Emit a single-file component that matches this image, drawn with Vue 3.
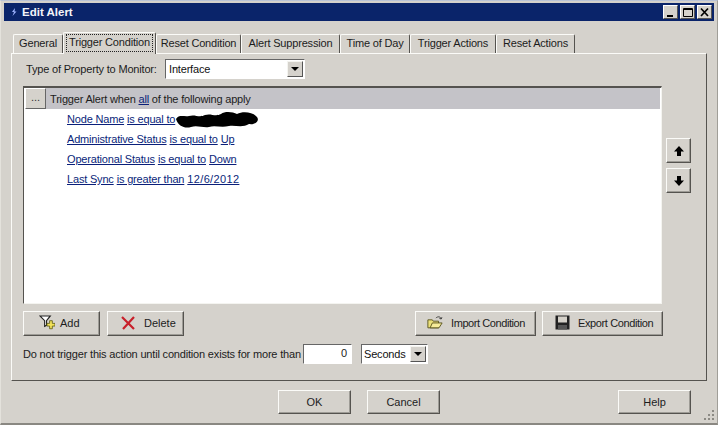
<script setup>
const tabs = [
  { label: 'General', w: 50 },
  { label: 'Trigger Condition', w: 93, active: true },
  { label: 'Reset Condition', w: 85 },
  { label: 'Alert Suppression', w: 99 },
  { label: 'Time of Day', w: 70 },
  { label: 'Trigger Actions', w: 86 },
  { label: 'Reset Actions', w: 79 },
]
</script>

<template>
  <div class="window">
    <header class="titlebar">
      <svg class="appicon" width="10" height="10" viewBox="0 0 10 10">
        <path d="M6 1 L3 5 H5 L3.5 9 L7.5 4.5 H5.5 Z" fill="#9fb4ff" />
      </svg>
      <span class="title">Edit Alert</span>
      <div class="controls">
        <button class="ctl"><svg width="12" height="11" viewBox="0 0 12 11"><rect x="2" y="8" width="6" height="2" fill="#000" /></svg></button>
        <button class="ctl"><svg width="12" height="11" viewBox="0 0 12 11"><path d="M1.5 1.5h9v8h-9z M1.5 2.5h9" fill="none" stroke="#000" /></svg></button>
        <button class="ctl close"><svg width="12" height="11" viewBox="0 0 12 11"><path d="M2 1.5l7 7.5M9 1.5l-7 7.5" stroke="#000" stroke-width="1.7" /></svg></button>
      </div>
    </header>

    <div class="tabs">
      <div
        v-for="t in tabs"
        :key="t.label"
        class="tab"
        :class="{ active: t.active }"
        :style="{ width: t.w + 'px' }"
      >
        <span :class="{ focus: t.active }">{{ t.label }}</span>
      </div>
    </div>

    <section class="panel">
      <div class="monitor">
        <label>Type of Property to Monitor:</label>
        <div class="select wide">
          <span class="value">Interface</span>
          <span class="arrow"><i></i></span>
        </div>
      </div>

      <div class="middle">
        <div class="box">
          <div class="boxhead">
            <button class="dots">...</button>
            <span>Trigger Alert when <a>all</a> of the following apply</span>
          </div>
          <div class="rows">
            <div class="row"><a>Node Name</a> <a>is equal to</a>
              <svg class="blot" width="84" height="18" viewBox="0 0 84 18">
                <path d="M1 8 C4 3 9 6 14 5 C20 3 24 7 30 4 C36 2 40 6 46 3 C50 0 58 1 62 3 C68 0 78 1 82 6 C85 10 80 14 74 13 C68 17 60 14 54 15 C46 17 40 14 34 16 C28 17 22 14 16 16 C10 18 3 15 1 8 Z" fill="#000" />
              </svg>
            </div>
            <div class="row"><a>Administrative Status</a> <a>is equal to</a> <a>Up</a></div>
            <div class="row"><a>Operational Status</a> <a>is equal to</a> <a>Down</a></div>
            <div class="row"><a>Last Sync</a> <a>is greater than</a> <a class="date">12/6/2012</a></div>
          </div>
        </div>
        <div class="updown">
          <button class="btn arrowbtn">
            <svg width="12" height="12" viewBox="0 0 12 12"><path d="M6 1L11 6.5H8V11H4V6.5H1Z" fill="#000" /></svg>
          </button>
          <button class="btn arrowbtn">
            <svg width="12" height="12" viewBox="0 0 12 12"><path d="M6 11L1 5.5H4V1H8V5.5H11Z" fill="#000" /></svg>
          </button>
        </div>
      </div>

      <div class="actions">
        <button class="btn act add">
          <svg width="16" height="18" viewBox="1 1 17 19">
            <path d="M2 3H13L9 8V13L7 14V8Z" fill="#fff" stroke="#222" stroke-width="1.2" />
            <path d="M11 12h3v-3h3v3h3v3h-3v3h-3v-3h-3z" transform="translate(-1 -0.5) scale(.95)" fill="#f2e25a" stroke="#5a5a10" stroke-width=".9" />
          </svg>
          <span>Add</span>
        </button>
        <button class="btn act del">
          <svg width="16" height="16" viewBox="0 0 16 16">
            <path d="M2 2L14 14M14 2L3 14" stroke="#c8202a" stroke-width="2.2" fill="none" />
          </svg>
          <span>Delete</span>
        </button>
        <div class="spacer"></div>
        <button class="btn act imp">
          <svg width="16" height="15" viewBox="0 0 18 16">
            <path d="M1 5H6L7 6.5H13V14H1Z" fill="#ebe07a" stroke="#55501a" />
            <path d="M3.5 14L6 8.5H17L13.5 14Z" fill="#f6ec9a" stroke="#55501a" />
            <path d="M10 3C12 1 15 1 16 4M16 4L14 3.5M16 4L16.8 2" fill="none" stroke="#333" />
          </svg>
          <span>Import Condition</span>
        </button>
        <button class="btn act exp">
          <svg width="15" height="15" viewBox="0 0 15 15">
            <path d="M0.5 0.5H14.5V14.5H0.5Z" fill="#222" />
            <rect x="3" y="1.5" width="9" height="6" fill="#d4d0c8" />
            <rect x="3" y="10" width="9" height="4.5" fill="#555" />
          </svg>
          <span>Export Condition</span>
        </button>
      </div>

      <div class="delay">
        <label>Do not trigger this action until condition exists for more than</label>
        <div class="input">0</div>
        <div class="select unit">
          <span class="value">Seconds</span>
          <span class="arrow"><i></i></span>
        </div>
      </div>
    </section>

    <footer class="footer">
      <button class="btn foot">OK</button>
      <button class="btn foot">Cancel</button>
      <div class="spacer"></div>
      <button class="btn foot">Help</button>
    </footer>

    <svg class="grip" width="12" height="12" viewBox="0 0 12 12">
      <g fill="#8c8a84">
        <rect x="9" y="1" width="2" height="2" />
        <rect x="5" y="5" width="2" height="2" />
        <rect x="9" y="5" width="2" height="2" />
        <rect x="1" y="9" width="2" height="2" />
        <rect x="5" y="9" width="2" height="2" />
        <rect x="9" y="9" width="2" height="2" />
      </g>
    </svg>
  </div>
</template>

<style>
html, body { margin: 0; overflow: hidden; background: #d4d0c8; }
</style>

<style scoped>
* { box-sizing: border-box; }
.window {
  position: relative;
  width: 718px;
  height: 425px;
  padding: 3px 3px 0;
  background: #d5d2cc;
  border-top: 1px solid #b9c3d6;
  border-left: 1px solid #e4e2dc;
  border-right: 1px solid #a09e98;
  border-bottom: 2px solid #8a8882;
  font-family: "Liberation Sans", Arial, sans-serif;
  font-size: 11px;
  letter-spacing: -0.18px;
  color: #1c1c1c;
  display: flex;
  flex-direction: column;
}
.titlebar {
  height: 18px;
  margin-top: -1px;
  background: #0a246a;
  display: flex;
  align-items: center;
  padding: 0 2px 0 5px;
  flex: none;
}
.appicon { margin-right: 3px; }
.title { color: #f4f4f8; font-weight: 700; font-size: 11.5px; letter-spacing: 0; }
.controls { margin-left: auto; display: flex; gap: 2px; }
.ctl {
  width: 15px;
  height: 14px;
  padding: 0;
  background: #d5d2cc;
  border: 1px solid;
  border-color: #fff #555 #555 #fff;
  display: flex;
  align-items: center;
  justify-content: center;
}
.tabs {
  display: flex;
  align-items: flex-end;
  height: 22px;
  margin-top: 10px;
  padding-left: 9px;
  flex: none;
  position: relative;
  z-index: 1;
}
.tab {
  height: 19px;
  padding-bottom: 2px;
  background: #d5d2cc;
  border: 1px solid;
  border-color: #fbfbf8 #55534f transparent #fbfbf8;
  border-bottom: none;
  border-radius: 2px 2px 0 0;
  display: flex;
  align-items: center;
  justify-content: center;
  white-space: nowrap;
}
.tab.active {
  height: 22px;
  margin-bottom: -1px;
}
.focus { border: 1px dotted #222; padding: 0 2px 1px; line-height: 15px; }
.panel {
  width: 696px;
  height: 328px;
  margin-left: 7px;
  padding: 5px 12px 0 11px;
  border: 1px solid;
  border-color: #fbfbf8 #55534f #55534f #fbfbf8;
  flex: none;
}
.monitor {
  height: 20px;
  display: flex;
  align-items: center;
  padding-left: 3px;
}
.monitor label { width: 139px; white-space: nowrap; }
.select {
  display: flex;
  align-items: center;
  background: #fff;
  border: 1px solid;
  border-color: #666 #fff #fff #666;
  height: 20px;
  padding: 1px;
}
.select.wide { width: 140px; }
.select.unit { width: 67px; margin-left: 9px; }
.unit .value { padding-left: 1px; }
.value { flex: 1; padding-left: 2px; color: #111; }
.arrow {
  width: 16px;
  height: 16px;
  background: #d5d2cc;
  border: 1px solid;
  border-color: #f4f4f0 #555 #555 #f4f4f0;
  display: flex;
  align-items: center;
  justify-content: center;
}
.arrow i {
  border-left: 4px solid transparent;
  border-right: 4px solid transparent;
  border-top: 4px solid #000;
}
.middle {
  display: flex;
  gap: 4px;
  margin-top: 7px;
}
.box {
  width: 639px;
  height: 218px;
  background: #fff;
  border: 1px solid;
  border-top: 2px solid #55534f;
  border-left-color: #55534f;
  border-right-color: #f4f4f0;
  border-bottom-color: #f4f4f0;
  padding: 0 1px;
}
.boxhead {
  height: 21px;
  background: #c4c3c8;
  display: flex;
  align-items: center;
  gap: 4px;
}
.dots {
  width: 21px;
  height: 21px;
  padding: 0 0 4px;
  font: inherit;
  color: #333;
  background: #d5d2cc;
  border: 1px solid;
  border-color: #fff #666 #666 #fff;
}
a { color: #0a1f7a; text-decoration: underline; }
.date { letter-spacing: 0.35px; }
.rows { padding: 0 0 0 42px; }
.row {
  height: 20px;
  line-height: 20px;
  display: flex;
  gap: 3px;
  align-items: center;
  white-space: nowrap;
}
.blot { margin-left: -3px; margin-top: 1px; }
.updown {
  display: flex;
  flex-direction: column;
  gap: 5px;
  padding-top: 52px;
}
.btn {
  font: inherit;
  color: #1c1c1c;
  background: #d5d2cc;
  border: 1px solid;
  border-color: #fbfbf8 #55534f #55534f #fbfbf8;
  box-shadow: inset -1px -1px 0 #9e9c96;
  padding: 0;
  display: flex;
  align-items: center;
  justify-content: center;
}
.arrowbtn { width: 25px; height: 25px; }
.actions {
  display: flex;
  height: 25px;
  margin-top: 7px;
  gap: 7px;
  width: 640px;
}
.spacer { flex: 1; }
.act { justify-content: flex-start; padding-bottom: 2px; flex: none; }
.add { width: 77px; padding-left: 15px; gap: 5px; }
.del { width: 77px; padding-left: 12px; gap: 8px; }
.imp { width: 121px; padding-left: 11px; gap: 8px; margin-left: -1px; letter-spacing: -0.42px; }
.exp { width: 121px; padding-left: 12px; gap: 8px; margin-left: -1px; letter-spacing: -0.38px; }
.delay {
  display: flex;
  align-items: center;
  height: 20px;
  margin-top: 8px;
}
.delay label { width: 280px; white-space: nowrap; }
.input {
  width: 49px;
  height: 20px;
  background: #fff;
  border: 1px solid;
  border-color: #666 #fff #fff #666;
  text-align: right;
  padding: 2px 4px 0 0;
}
.footer {
  display: flex;
  gap: 16px;
  height: 24px;
  margin-top: 9px;
  padding-left: 274px;
  padding-right: 23px;
  flex: none;
}
.foot { width: 73px; }
.grip { position: absolute; right: 2px; bottom: 2px; }
</style>
